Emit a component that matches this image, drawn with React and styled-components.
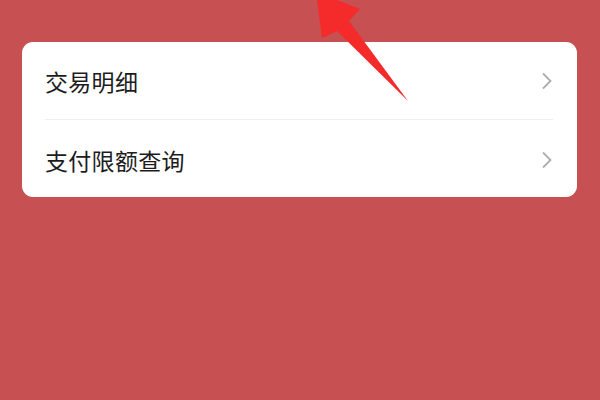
import React from 'react';
import styled, { createGlobalStyle } from 'styled-components';

const Global = createGlobalStyle`
  html, body {
    margin: 0;
    padding: 0;
    background: #c65052;
  }
  body {
    font-family: "Noto Sans CJK SC", "Noto Sans", sans-serif;
  }
`;

const Page = styled.div`
  position: relative;
  width: 600px;
  height: 400px;
  overflow: hidden;
  background: #c65052;
  padding: 42px 23px 0 22px;
  box-sizing: border-box;
`;

const Card = styled.div`
  background: #fff;
  border-radius: 11px;
  padding: 0 24px 0 23px;
  display: flex;
  flex-direction: column;
`;

const Row = styled.div`
  height: ${props => (props.last ? '77px' : '78px')};
  display: flex;
  align-items: center;
  justify-content: space-between;
  border-bottom: ${props => (props.last ? 'none' : '1px solid #eeeeee')};
  box-sizing: border-box;
`;

const Label = styled.span`
  font-size: 23px;
  font-weight: 400;
  color: #1c1c1c;
  letter-spacing: 0.3px;
  padding-top: ${props => (props.last ? '3px' : '0')};
`;

const Chevron = styled.svg`
  width: 12px;
  height: 18px;
  padding-top: ${props => (props.last ? '3px' : '0')};
`;

const Arrow = styled.svg`
  position: absolute;
  left: 0;
  top: 0;
  pointer-events: none;
`;

const RedArrow = () => (
  <Arrow width="600" height="400" viewBox="0 0 600 400">
    <polygon
      points="316,-8 360,9 349,21 408,101 337,31 322,38"
      fill="#f42a2b"
    />
  </Arrow>
);

const Item = ({ label, last }) => (
  <Row last={last}>
    <Label last={last}>{label}</Label>
    <Chevron viewBox="0 0 12 18" last={last}>
      <path d="M2 1.5 L9.5 9 L2 16.5" fill="none" stroke="#adadad" strokeWidth="1.8" />
    </Chevron>
  </Row>
);

export default function App() {
  return (
    <>
      <Global />
      <Page>
        <Card>
          <Item label="交易明细" />
          <Item label="支付限额查询" last />
        </Card>
        <RedArrow />
      </Page>
    </>
  );
}
